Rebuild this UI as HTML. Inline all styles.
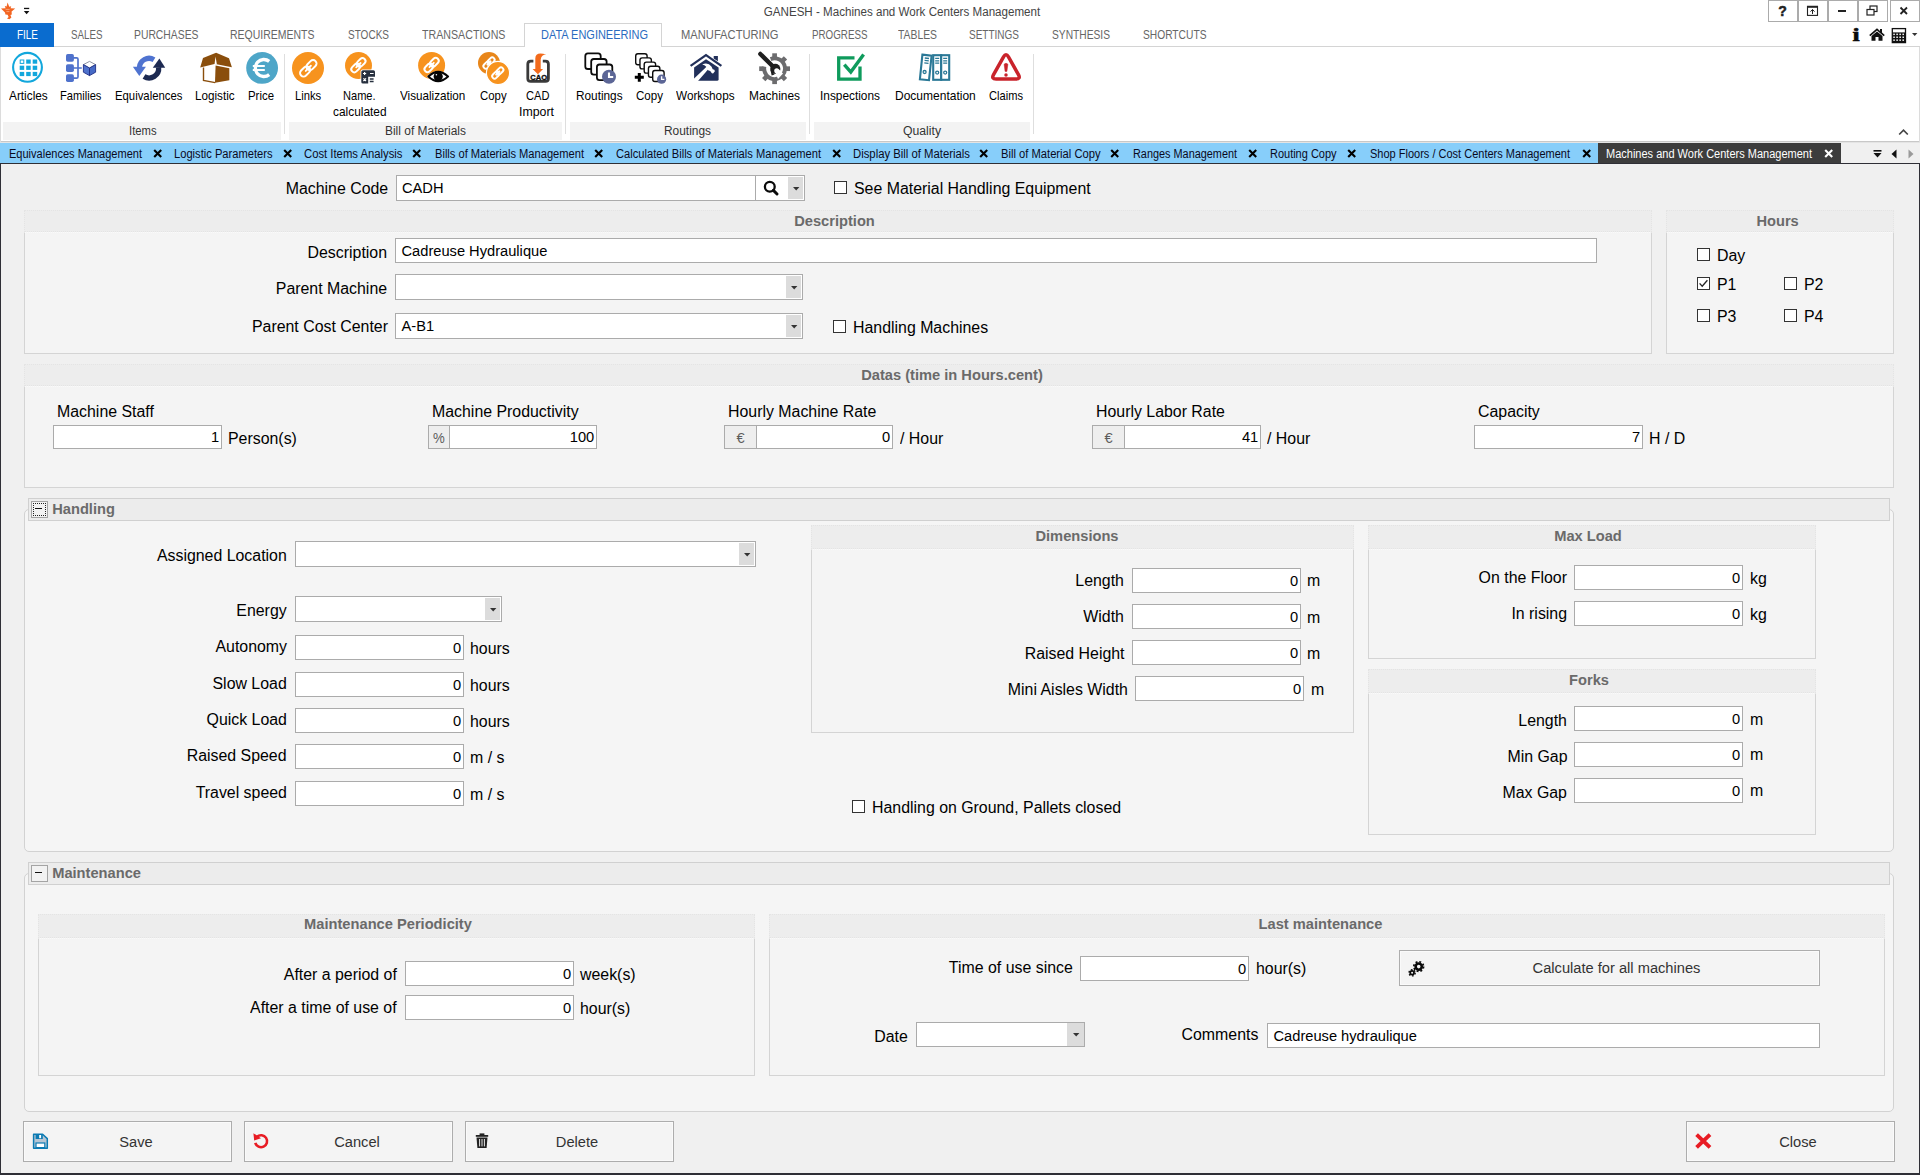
<!DOCTYPE html>
<html lang="en"><head><meta charset="utf-8"><title>GANESH - Machines and Work Centers Management</title>
<style>
html,body{margin:0;padding:0;background:#fff;}
body{width:1920px;height:1175px;overflow:hidden;font-family:"Liberation Sans",sans-serif;}
#app{position:relative;width:1920px;height:1175px;overflow:hidden;background:#fff;color:#000;}
#app div,#app span.t,#app svg{position:absolute;box-sizing:border-box;}
span.t{white-space:nowrap;display:block;}
.inp{background:#fff;border:1px solid #ababab;}
.grp-h{background:#ededed;border:1px dotted #e4e4e4;}
.grp-b{background:#f4f4f4;border:1px solid #d4d4d4;border-top:1px dotted #fafafa;}
.btn{background:#f4f4f4;border:1px solid #adadad;box-shadow:inset 0 0 0 1px #fafafa;}
.cb{background:#fff;border:1px solid #333;}
.dd{background:#dcdcdc;}
.addon{background:#eee;border:1px solid #ababab;}

</style></head>
<body>
<div id="app">
<!-- title bar -->
<svg style="left:0px;top:2px;" width="17" height="18" viewBox="0 0 17 18"><path d="M7.6 0.6 L9.2 4.8 L11.2 4.2 L10.6 6.2 L15.2 6.6 L11.6 9.6 L11.8 12.4 L10.4 13 L11.4 15.6 L9.4 17.2 L7 16.4 L8.6 15 L7.6 12.8 L5.4 12.6 L5 10.4 L1 6.6 L5.6 6.2 L4.8 4 L6.6 4.6 Z" fill="#f26522"/>
<path d="M5.6 7.4 L9.6 7.4 M6.4 9.6 L9.4 9.6" stroke="#f9a981" stroke-width="0.9" fill="none"/></svg>
<svg style="left:23px;top:7px;" width="8" height="8" viewBox="0 0 8 8"><rect x="1" y="0.8" width="5.2" height="1.3" fill="#111"/><path d="M0.8 4 L6.4 4 L3.6 7.2 Z" fill="#111"/></svg>
<span class="t" style="top:3.00px;font-size:12px;line-height:18px;color:#444;left:501.5px;width:800px;text-align:center;transform:scaleX(0.9672);transform-origin:center center;">GANESH - Machines and Work Centers Management</span>
<div style="left:1768px;top:0px;width:30px;height:22px;background:#fff;border:1px solid #ababab;"></div>
<div style="left:1798px;top:0px;width:30px;height:22px;background:#fff;border:1px solid #ababab;"></div>
<div style="left:1828px;top:0px;width:30px;height:22px;background:#fff;border:1px solid #ababab;"></div>
<div style="left:1858px;top:0px;width:30px;height:22px;background:#fff;border:1px solid #ababab;"></div>
<div style="left:1890px;top:0px;width:30px;height:22px;background:#fff;border:1px solid #ababab;"></div>
<span class="t" style="top:1.30px;font-size:14px;line-height:21px;color:#222;font-weight:bold;left:1382.6px;width:800px;text-align:center;-webkit-text-stroke:0.5px #222;">?</span>
<svg style="left:1806px;top:5px;" width="13" height="12" viewBox="0 0 13 12"><rect x="1.5" y="1.4" width="10" height="9" fill="none" stroke="#222" stroke-width="1.1"/><rect x="1" y="0.9" width="11" height="1.9" fill="#222"/><path d="M6.5 9 V4.6 M4.5 6.6 L6.5 4.5 L8.5 6.6" fill="none" stroke="#222" stroke-width="1"/></svg>
<div style="left:1838px;top:10px;width:8px;height:2px;background:#222;"></div>
<svg style="left:1866px;top:5px;" width="13" height="12" viewBox="0 0 13 12"><rect x="4" y="1" width="7" height="5.5" fill="#fff" stroke="#222" stroke-width="1.2"/><rect x="1" y="4.5" width="7" height="5.5" fill="#fff" stroke="#222" stroke-width="1.2"/></svg>
<svg style="left:1899px;top:6px;" width="10" height="10" viewBox="0 0 10 10"><path d="M1.5 1.5 L8 8 M8 1.5 L1.5 8" stroke="#222" stroke-width="1.8" fill="none"/></svg>
<!-- ribbon tabs -->
<div style="left:0px;top:46px;width:1920px;height:1px;background:#d4d4d4;"></div>
<div style="left:0px;top:23px;width:54px;height:24px;background:#0a6ccf;"></div>
<span class="t" style="top:25.80px;font-size:12.6px;line-height:19px;color:#fff;left:16.5px;transform:scaleX(0.7892);transform-origin:left center;">FILE</span>
<div style="left:524px;top:23px;width:138px;height:24px;background:#fff;border:1px solid #d4d4d4;border-bottom:none;"></div>
<span class="t" style="top:25.80px;font-size:12.6px;line-height:19px;color:#666;left:70.5px;transform:scaleX(0.7754);transform-origin:left center;">SALES</span>
<span class="t" style="top:25.80px;font-size:12.6px;line-height:19px;color:#666;left:134px;transform:scaleX(0.8225);transform-origin:left center;">PURCHASES</span>
<span class="t" style="top:25.80px;font-size:12.6px;line-height:19px;color:#666;left:230px;transform:scaleX(0.8324);transform-origin:left center;">REQUIREMENTS</span>
<span class="t" style="top:25.80px;font-size:12.6px;line-height:19px;color:#666;left:348px;transform:scaleX(0.7949);transform-origin:left center;">STOCKS</span>
<span class="t" style="top:25.80px;font-size:12.6px;line-height:19px;color:#666;left:421.5px;transform:scaleX(0.8459);transform-origin:left center;">TRANSACTIONS</span>
<span class="t" style="top:25.80px;font-size:12.6px;line-height:19px;color:#2a6bc0;left:540.5px;transform:scaleX(0.8717);transform-origin:left center;">DATA ENGINEERING</span>
<span class="t" style="top:25.80px;font-size:12.6px;line-height:19px;color:#666;left:680.5px;transform:scaleX(0.8872);transform-origin:left center;">MANUFACTURING</span>
<span class="t" style="top:25.80px;font-size:12.6px;line-height:19px;color:#666;left:811.5px;transform:scaleX(0.7771);transform-origin:left center;">PROGRESS</span>
<span class="t" style="top:25.80px;font-size:12.6px;line-height:19px;color:#666;left:898px;transform:scaleX(0.8230);transform-origin:left center;">TABLES</span>
<span class="t" style="top:25.80px;font-size:12.6px;line-height:19px;color:#666;left:969px;transform:scaleX(0.7936);transform-origin:left center;">SETTINGS</span>
<span class="t" style="top:25.80px;font-size:12.6px;line-height:19px;color:#666;left:1052px;transform:scaleX(0.8121);transform-origin:left center;">SYNTHESIS</span>
<span class="t" style="top:25.80px;font-size:12.6px;line-height:19px;color:#666;left:1142.5px;transform:scaleX(0.8123);transform-origin:left center;">SHORTCUTS</span>
<span class="t" style="top:20.60px;font-size:19px;line-height:28px;color:#0a0a0a;font-weight:bold;left:1455.5px;width:800px;text-align:center;transform:scaleX(1.3500);transform-origin:center center;font-family:'Liberation Serif',serif;-webkit-text-stroke:0.6px #0a0a0a;">i</span>
<svg style="left:1869px;top:28px;" width="16" height="13" viewBox="0 0 16 13"><path d="M8 0.3 L0.2 7 L1.3 8.2 L8 2.5 L14.7 8.2 L15.8 7 L13 4.6 V1 H11 V2.9 Z" fill="#111"/><path d="M2.5 8 L8 3.5 L13.5 8 V12.8 H9.5 V9 H6.5 V12.8 H2.5 Z" fill="#111"/></svg>
<svg style="left:1891px;top:27px;" width="16" height="17" viewBox="0 0 16 17"><rect x="1.3" y="1.6" width="13.2" height="14" fill="#fff" stroke="#111" stroke-width="1.3"/><rect x="1.3" y="5.4" width="13.2" height="10.2" fill="#111"/><rect x="2.30" y="6.60" width="1.5" height="1.5" fill="#fff"/><rect x="5.35" y="6.60" width="1.5" height="1.5" fill="#fff"/><rect x="8.40" y="6.60" width="1.5" height="1.5" fill="#fff"/><rect x="11.45" y="6.60" width="1.5" height="1.5" fill="#fff"/><rect x="2.30" y="9.50" width="1.5" height="1.5" fill="#fff"/><rect x="5.35" y="9.50" width="1.5" height="1.5" fill="#fff"/><rect x="8.40" y="9.50" width="1.5" height="1.5" fill="#fff"/><rect x="11.45" y="9.50" width="1.5" height="1.5" fill="#fff"/><rect x="2.30" y="12.40" width="1.5" height="1.5" fill="#fff"/><rect x="5.35" y="12.40" width="1.5" height="1.5" fill="#fff"/><rect x="8.40" y="12.40" width="1.5" height="1.5" fill="#fff"/><rect x="11.45" y="12.40" width="1.5" height="1.5" fill="#fff"/></svg>
<svg style="left:1912px;top:33px;" width="6" height="4" viewBox="0 0 6 4"><path d="M0 0 H5.4 L2.7 3 Z" fill="#333"/></svg>
<!-- ribbon body -->
<div style="left:0px;top:141px;width:1920px;height:1px;background:#c8c8c8;"></div>
<div style="left:0px;top:142px;width:1920px;height:1px;background:#e4e4e4;"></div>
<div style="left:0px;top:47px;width:1px;height:95px;background:#dcdcdc;"></div>
<div style="left:1919px;top:47px;width:1px;height:95px;background:#dcdcdc;"></div>
<div style="left:3px;top:122px;width:278px;height:18px;background:#f3f3f3;"></div>
<span class="t" style="top:122.00px;font-size:12px;line-height:18px;color:#333;left:128.5px;transform:scaleX(0.9374);transform-origin:left center;">Items</span>
<div style="left:289px;top:122px;width:273px;height:18px;background:#f3f3f3;"></div>
<span class="t" style="top:122.00px;font-size:12px;line-height:18px;color:#333;left:385px;transform:scaleX(0.9956);transform-origin:left center;">Bill of Materials</span>
<div style="left:570px;top:122px;width:236px;height:18px;background:#f3f3f3;"></div>
<span class="t" style="top:122.00px;font-size:12px;line-height:18px;color:#333;left:664px;transform:scaleX(0.9924);transform-origin:left center;">Routings</span>
<div style="left:814px;top:122px;width:216px;height:18px;background:#f3f3f3;"></div>
<span class="t" style="top:122.00px;font-size:12px;line-height:18px;color:#333;left:903px;transform:scaleX(1.0175);transform-origin:left center;">Quality</span>
<div style="left:284px;top:54px;width:1px;height:80px;background:#dedede;"></div>
<div style="left:565px;top:54px;width:1px;height:80px;background:#dedede;"></div>
<div style="left:809px;top:54px;width:1px;height:80px;background:#dedede;"></div>
<div style="left:1033px;top:54px;width:1px;height:80px;background:#dedede;"></div>
<span class="t" style="top:86.90px;font-size:12.6px;line-height:19px;color:#000;left:9px;transform:scaleX(0.9393);transform-origin:left center;">Articles</span>
<span class="t" style="top:86.90px;font-size:12.6px;line-height:19px;color:#000;left:60.3px;transform:scaleX(0.8827);transform-origin:left center;">Families</span>
<span class="t" style="top:86.90px;font-size:12.6px;line-height:19px;color:#000;left:115.4px;transform:scaleX(0.8993);transform-origin:left center;">Equivalences</span>
<span class="t" style="top:86.90px;font-size:12.6px;line-height:19px;color:#000;left:195.4px;transform:scaleX(0.9270);transform-origin:left center;">Logistic</span>
<span class="t" style="top:86.90px;font-size:12.6px;line-height:19px;color:#000;left:248px;transform:scaleX(0.9057);transform-origin:left center;">Price</span>
<span class="t" style="top:86.90px;font-size:12.6px;line-height:19px;color:#000;left:294.6px;transform:scaleX(0.8908);transform-origin:left center;">Links</span>
<span class="t" style="top:86.90px;font-size:12.6px;line-height:19px;color:#000;left:343.4px;transform:scaleX(0.8785);transform-origin:left center;">Name.</span>
<span class="t" style="top:102.90px;font-size:12.6px;line-height:19px;color:#000;left:333px;transform:scaleX(0.9448);transform-origin:left center;">calculated</span>
<span class="t" style="top:86.90px;font-size:12.6px;line-height:19px;color:#000;left:400px;transform:scaleX(0.9275);transform-origin:left center;">Visualization</span>
<span class="t" style="top:86.90px;font-size:12.6px;line-height:19px;color:#000;left:480px;transform:scaleX(0.9044);transform-origin:left center;">Copy</span>
<span class="t" style="top:86.90px;font-size:12.6px;line-height:19px;color:#000;left:526px;transform:scaleX(0.8796);transform-origin:left center;">CAD</span>
<span class="t" style="top:102.90px;font-size:12.6px;line-height:19px;color:#000;left:519px;transform:scaleX(0.9802);transform-origin:left center;">Import</span>
<span class="t" style="top:86.90px;font-size:12.6px;line-height:19px;color:#000;left:576.4px;transform:scaleX(0.9371);transform-origin:left center;">Routings</span>
<span class="t" style="top:86.90px;font-size:12.6px;line-height:19px;color:#000;left:636px;transform:scaleX(0.9180);transform-origin:left center;">Copy</span>
<span class="t" style="top:86.90px;font-size:12.6px;line-height:19px;color:#000;left:676.4px;transform:scaleX(0.9333);transform-origin:left center;">Workshops</span>
<span class="t" style="top:86.90px;font-size:12.6px;line-height:19px;color:#000;left:749px;transform:scaleX(0.9458);transform-origin:left center;">Machines</span>
<span class="t" style="top:86.90px;font-size:12.6px;line-height:19px;color:#000;left:820px;transform:scaleX(0.9414);transform-origin:left center;">Inspections</span>
<span class="t" style="top:86.90px;font-size:12.6px;line-height:19px;color:#000;left:894.6px;transform:scaleX(0.9535);transform-origin:left center;">Documentation</span>
<span class="t" style="top:86.90px;font-size:12.6px;line-height:19px;color:#000;left:989px;transform:scaleX(0.8831);transform-origin:left center;">Claims</span>
<svg style="left:1898px;top:128px;" width="11" height="8" viewBox="0 0 11 8"><path d="M1.2 6.5 L5.5 2.2 L9.8 6.5" fill="none" stroke="#444" stroke-width="1.7"/></svg>
<!-- ribbon icons -->
<svg style="left:11px;top:51px;" width="34" height="34" viewBox="11 51 34 34"><circle cx="27.5" cy="67.3" r="14.4" fill="#fff" stroke="#12a7dc" stroke-width="2.1"/><rect x="20.2" y="60.0" width="3.6" height="3.4" fill="#fff" stroke="#12a7dc" stroke-width="1"/><rect x="26.2" y="59.5" width="4.5" height="4.2" fill="#12a7dc"/><rect x="32.7" y="59.5" width="4.5" height="4.2" fill="#12a7dc"/><rect x="19.7" y="65.7" width="4.5" height="4.2" fill="#12a7dc"/><rect x="26.2" y="65.7" width="4.5" height="4.2" fill="#12a7dc"/><rect x="32.7" y="65.7" width="4.5" height="4.2" fill="#12a7dc"/><rect x="19.7" y="71.9" width="4.5" height="4.2" fill="#12a7dc"/><rect x="26.2" y="71.9" width="4.5" height="4.2" fill="#12a7dc"/><rect x="32.7" y="71.9" width="4.5" height="4.2" fill="#12a7dc"/></svg>
<svg style="left:64px;top:52px;" width="34" height="32" viewBox="64 52 34 32"><rect x="66" y="54.1" width="7.9" height="7.7" rx="1.7" fill="#4f72cc"/><rect x="66" y="64.2" width="7.9" height="7.7" rx="1.7" fill="#4f72cc"/><rect x="66" y="74.3" width="7.9" height="7.7" rx="1.7" fill="#4f72cc"/><path d="M73 57.9 H76.6 Q78 57.9 78 59.3 V76.7 Q78 78.1 76.6 78.1 H73 M73 68 H81.8" fill="none" stroke="#4f72cc" stroke-width="1.7"/><path d="M83.4 64.6 L89.5 61.4 L95.6 64.6 L89.5 68 Z" fill="#fff" stroke="#7f8697" stroke-width="0.9"/><path d="M83.4 64.6 L89.5 68 V75.6 L83.4 72.2 Z" fill="#4f72cc" stroke="#1f2f86" stroke-width="0.9" stroke-linejoin="round"/><path d="M95.6 64.6 L89.5 68 V75.6 L95.6 72.2 Z" fill="#466ac6" stroke="#1f2f86" stroke-width="0.9" stroke-linejoin="round"/></svg>
<svg style="left:132px;top:52px;" width="34" height="32" viewBox="132 52 34 32"><path d="M154 59.8 A9.6 9.6 0 0 0 139.4 67.6" fill="none" stroke="#4f73d0" stroke-width="5.3"/><path d="M132.9 66.8 H145.9 L139.3 75.9 Z" fill="#4f73d0"/><path d="M144 76.6 A9.6 9.6 0 0 0 158.6 67.4" fill="none" stroke="#1d2a52" stroke-width="5.3"/><path d="M152.8 67.7 H165.2 L159.4 58.6 Z" fill="#1d2a52"/></svg>
<svg style="left:199px;top:52px;" width="34" height="32" viewBox="199 52 34 32"><path d="M216.1 52.8 L229 58.2 L231.9 67.3 L216.6 64.3 L214.4 64.1 L200.2 67.6 L203 58.1 Z" fill="#8a4e0c"/><path d="M215.5 56.5 L216.9 64.6 L214.5 64.4 Z" fill="#fff"/><path d="M215.6 65.4 L229.3 68.3 V80.3 L215 82.8 Z" fill="#8a4e0c"/><path d="M203.5 67.6 V80.4 L215.2 82.6" fill="none" stroke="#8a4e0c" stroke-width="1.4"/></svg>
<svg style="left:245px;top:51px;" width="34" height="34" viewBox="245 51 34 34"><circle cx="262.1" cy="67.9" r="15.9" fill="#4ea6c8"/><path d="M269.2 61.4 A8.5 8.5 0 1 0 269.2 74.6" fill="none" stroke="#fff" stroke-width="3.3"/><path d="M252.8 66 H264.8 M252.8 70 H264.8" stroke="#fff" stroke-width="2"/></svg>
<svg style="left:291px;top:51px;" width="34" height="34" viewBox="291 51 34 34"><circle cx="308" cy="68" r="16" fill="#f7931e"/><g transform="translate(308.3 68.3) rotate(-45) scale(1.0)"><rect x="-10.2" y="-3.5" width="11.4" height="7" rx="3.5" fill="#f7931e" stroke="#fff" stroke-width="1.95"/><rect x="-1.2" y="-3.5" width="11.4" height="7" rx="3.5" fill="none" stroke="#fff" stroke-width="1.95"/><rect x="-4.6" y="-0.95" width="9.2" height="1.90" rx="1" fill="#fff"/></g></svg>
<svg style="left:344px;top:51px;" width="33" height="34" viewBox="344 51 33 34"><circle cx="358.5" cy="65.5" r="13.5" fill="#f7931e"/><g transform="translate(358.4 65.2) rotate(-45) scale(0.86)"><rect x="-10.2" y="-3.5" width="11.4" height="7" rx="3.5" fill="#f7931e" stroke="#fff" stroke-width="2.27"/><rect x="-1.2" y="-3.5" width="11.4" height="7" rx="3.5" fill="none" stroke="#fff" stroke-width="2.27"/><rect x="-4.6" y="-1.10" width="9.2" height="2.21" rx="1" fill="#fff"/></g><rect x="360.6" y="69.4" width="15" height="14.8" rx="2" fill="#fff"/><path d="M363 70.2 H373.4 Q375 70.2 375 71.8 V76.8 H368.2 V83.6 H363 Q361.3 83.6 361.3 82 V71.8 Q361.3 70.2 363 70.2 Z" fill="#27303f"/><path d="M363 73.5 H366.2 M364.6 71.9 V75.1 M370 73.5 H373.6 M363.4 78.4 L366 81 M366 78.4 L363.4 81" stroke="#fff" stroke-width="1.2" fill="none"/><path d="M369.8 79 H373.6 M369.8 81.4 H373.6" stroke="#27303f" stroke-width="1.5" fill="none"/></svg>
<svg style="left:417px;top:51px;" width="34" height="35" viewBox="417 51 34 35"><circle cx="431.6" cy="65.4" r="13.5" fill="#f7931e"/><g transform="translate(431.6 65) rotate(-45) scale(0.86)"><rect x="-10.2" y="-3.5" width="11.4" height="7" rx="3.5" fill="#f7931e" stroke="#fff" stroke-width="2.27"/><rect x="-1.2" y="-3.5" width="11.4" height="7" rx="3.5" fill="none" stroke="#fff" stroke-width="2.27"/><rect x="-4.6" y="-1.10" width="9.2" height="2.21" rx="1" fill="#fff"/></g><path d="M426.6 76.5 Q438 65.4 449.6 76.5 Q438 87.6 426.6 76.5 Z" fill="#fff"/><path d="M428.4 76.5 Q438.1 67.2 448 76.5 Q438.1 85.8 428.4 76.5 Z" fill="#fff" stroke="#050505" stroke-width="2.1" stroke-linejoin="round"/><circle cx="438.2" cy="76.5" r="4.6" fill="#050505"/><circle cx="436.4" cy="74.8" r="0.8" fill="#fff"/></svg>
<svg style="left:477px;top:51px;" width="34" height="35" viewBox="477 51 34 35"><circle cx="489" cy="63" r="11" fill="#e8861a"/><g transform="translate(489 63) rotate(-45) scale(0.68)"><rect x="-10.2" y="-3.5" width="11.4" height="7" rx="3.5" fill="#e8861a" stroke="#fff" stroke-width="2.87"/><rect x="-1.2" y="-3.5" width="11.4" height="7" rx="3.5" fill="none" stroke="#fff" stroke-width="2.87"/><rect x="-4.6" y="-1.40" width="9.2" height="2.79" rx="1" fill="#fff"/></g><circle cx="498" cy="73" r="11.6" fill="#f7931e" stroke="#fff" stroke-width="1.2"/><g transform="translate(497.8 73) rotate(-45) scale(0.68)"><rect x="-10.2" y="-3.5" width="11.4" height="7" rx="3.5" fill="#f7931e" stroke="#fff" stroke-width="2.87"/><rect x="-1.2" y="-3.5" width="11.4" height="7" rx="3.5" fill="none" stroke="#fff" stroke-width="2.87"/><rect x="-4.6" y="-1.40" width="9.2" height="2.79" rx="1" fill="#fff"/></g></svg>
<svg style="left:525px;top:51px;" width="27" height="34" viewBox="525 51 27 34"><path d="M533.4 61.1 H530.8 Q527.8 61.1 527.8 64.1 V78.4 Q527.8 81.4 530.8 81.4 H545.4 Q548.4 81.4 548.4 78.4 V64.1 Q548.4 61.1 545.4 61.1 H542.8" fill="none" stroke="#3a3a3a" stroke-width="2.8"/><path d="M535.3 69 V58.4 Q535.4 51.4 546.2 54.6 Q541.4 54.6 540.7 59.4 V69 H543.1 L537.9 74.2 L532.6 69 Z" fill="#f26a1b"/><text x="538.7" y="80.3" font-family="Liberation Sans, sans-serif" font-weight="bold" font-size="7.6" text-anchor="middle" fill="#0a0a0a" stroke="#0a0a0a" stroke-width="0.3" textLength="16.8" lengthAdjust="spacingAndGlyphs">CAO</text></svg>
<svg style="left:583px;top:51px;" width="35" height="34" viewBox="583 51 35 34"><rect x="585.3" y="53.4" width="15.4" height="15.6" rx="2.6" fill="#fff" stroke="#0c0c0c" stroke-width="1.8"/><rect x="591.2" y="59" width="15.4" height="15.6" rx="2.6" fill="#fff" stroke="#0c0c0c" stroke-width="1.8"/><rect x="596.9" y="64.5" width="15.4" height="15.6" rx="2.6" fill="#fff" stroke="#0c0c0c" stroke-width="1.8"/><circle cx="609" cy="76.8" r="7" fill="#5c6696"/><path d="M609 72.5 V77.0 H613.2" fill="none" stroke="#fff" stroke-width="2.10"/></svg>
<svg style="left:633px;top:51px;" width="35" height="34" viewBox="633 51 35 34"><rect x="635.70" y="53.70" width="11.4" height="11" rx="2.2" fill="#fff" stroke="#0c0c0c" stroke-width="1.4"/><rect x="639.95" y="57.90" width="11.4" height="11" rx="2.2" fill="#fff" stroke="#0c0c0c" stroke-width="1.4"/><rect x="644.20" y="62.10" width="11.4" height="11" rx="2.2" fill="#fff" stroke="#0c0c0c" stroke-width="1.4"/><rect x="648.45" y="66.30" width="11.4" height="11" rx="2.2" fill="#fff" stroke="#0c0c0c" stroke-width="1.4"/><rect x="652.70" y="70.50" width="11.4" height="11" rx="2.2" fill="#fff" stroke="#0c0c0c" stroke-width="1.4"/><path d="M634.8 77.3 H643.8 M639.3 72.9 V81.8" stroke="#000" stroke-width="3" fill="none"/><circle cx="661.6" cy="79.2" r="4.6" fill="#5c6696"/><path d="M661.6 76.3 V79.4 H664.4" fill="none" stroke="#fff" stroke-width="1.38"/></svg>
<svg style="left:689px;top:52px;" width="34" height="32" viewBox="689 52 34 32"><path d="M690.6 65.9 L706 55.2 L721.4 65.9" fill="none" stroke="#22305a" stroke-width="2.2"/><path d="M713.7 56 H717.9 V61.3 L713.7 58.4 Z" fill="#22305a"/><path d="M706 59.2 L718.6 67.5 V79.2 Q718.6 80.8 717 80.8 H695.6 Q694.1 80.8 694.1 79.3 V67.5 Z" fill="#22305a"/><path d="M693.6 79 L706.8 66.4 L708.9 68.4 L698 80.9 H693.6 Z" fill="#fff"/><path d="M702.2 64.6 Q707.8 61.8 711.6 66.8 L712.7 69.3 Q714.9 69.5 714.9 71.2 L713.1 73.4 Q711.2 73.6 711 71.8 Q709.6 70.3 708 70.2 L706.2 66.8 Q704.6 65 702.2 64.6 Z" fill="#fff"/></svg>
<svg style="left:756px;top:50px;" width="36" height="36" viewBox="756 50 36 36"><path d="M770.6 59.1 A10.4 10.4 0 1 1 764.4 66.6" fill="none" stroke="#6c6c6e" stroke-width="3.9"/><rect x="11.3" y="-2.35" width="4.1" height="4.7" fill="#6c6c6e" transform="translate(774.6 68.7) rotate(-90)"/><rect x="11.3" y="-2.35" width="4.1" height="4.7" fill="#6c6c6e" transform="translate(774.6 68.7) rotate(-45)"/><rect x="11.3" y="-2.35" width="4.1" height="4.7" fill="#6c6c6e" transform="translate(774.6 68.7) rotate(0)"/><rect x="11.3" y="-2.35" width="4.1" height="4.7" fill="#6c6c6e" transform="translate(774.6 68.7) rotate(45)"/><rect x="11.3" y="-2.35" width="4.1" height="4.7" fill="#6c6c6e" transform="translate(774.6 68.7) rotate(90)"/><rect x="11.3" y="-2.35" width="4.1" height="4.7" fill="#6c6c6e" transform="translate(774.6 68.7) rotate(135)"/><rect x="11.3" y="-2.35" width="4.1" height="4.7" fill="#6c6c6e" transform="translate(774.6 68.7) rotate(180)"/><path d="M760.3 53.9 L773 66.6" stroke="#1f1f1f" stroke-width="4.3" stroke-linecap="round" fill="none"/><circle cx="775.3" cy="68.9" r="5.1" fill="#1f1f1f"/><path d="M774.6 74.6 L770.6 70 L771.6 75.6 Z" fill="#1f1f1f"/><circle cx="776.7" cy="70.7" r="2.5" fill="#fff"/><path d="M775.2 72.6 L778.8 69.2 L783 73.5 L778 79 Z" fill="#fff"/></svg>
<svg style="left:836px;top:52px;" width="30" height="31" viewBox="836 52 30 31"><path d="M854.5 57.9 H838.7 V79.2 H860 V66.5" fill="none" stroke="#0f9b5c" stroke-width="3.3"/><path d="M844.3 64.6 L850.8 72 L863.6 54.6" fill="none" stroke="#0f9b5c" stroke-width="3.4"/></svg>
<svg style="left:918px;top:52px;" width="34" height="31" viewBox="918 52 34 31"><g fill="#fff" stroke="#2a7896" stroke-width="2.1"><path d="M922.4 54.6 L931.6 55.6 L929 80.2 L919.9 79.2 Z"/><rect x="933.2" y="55.2" width="8" height="24.6"/><rect x="941.2" y="55.2" width="8" height="24.6"/></g><g stroke="#2a7896" stroke-width="1.3" fill="none"><path d="M924.8 58 L929 58.5 M924.6 60.4 L928.8 60.9 M924.3 62.8 L928.5 63.3"/><path d="M935.2 58.4 H939.2 M935.2 60.8 H939.2 M935.2 63.2 H939.2 M943.2 58.4 H947.2 M943.2 60.8 H947.2 M943.2 63.2 H947.2"/><circle cx="924.6" cy="72" r="1.5"/><circle cx="937.2" cy="72.6" r="1.5"/><circle cx="945.2" cy="72.6" r="1.5"/></g></svg>
<svg style="left:989px;top:51px;" width="34" height="33" viewBox="989 51 34 33"><path d="M1003.54 56.95 Q1006.00 52.60 1008.46 56.95 L1018.44 74.65 Q1020.90 79.00 1015.90 79.00 L996.10 79.00 Q991.10 79.00 993.56 74.65 Z" fill="#fff" stroke="#c9232b" stroke-width="3.5" stroke-linejoin="round"/><path d="M1004.1 64.2 Q1006 62.2 1007.9 64.2 L1006.9 71.4 H1005.1 Z" fill="#c9232b" stroke="#c9232b" stroke-width="0.5" stroke-linejoin="round"/><circle cx="1006" cy="74.9" r="1.75" fill="#c9232b"/></svg>
<!-- doc tabs -->
<div style="left:0px;top:143px;width:1598px;height:20px;background:#87cefa;"></div>
<div style="left:1598px;top:143px;width:243px;height:20px;background:#3d3d3d;"></div>
<div style="left:1841px;top:143px;width:79px;height:20px;background:#f0f0f0;"></div>
<div style="left:0px;top:163px;width:1920px;height:1px;background:#2f2f36;"></div>
<span class="t" style="top:144.60px;font-size:12px;line-height:18px;color:#0a0a1e;left:9px;transform:scaleX(0.9188);transform-origin:left center;">Equivalences Management</span>
<svg style="left:153px;top:149px;" width="10" height="9" viewBox="0 0 10 9"><path d="M1.2 1 L8.2 8 M8.2 1 L1.2 8" stroke="#000" stroke-width="2.1" fill="none"/></svg>
<span class="t" style="top:144.60px;font-size:12px;line-height:18px;color:#0a0a1e;left:174px;transform:scaleX(0.9289);transform-origin:left center;">Logistic Parameters</span>
<svg style="left:283px;top:149px;" width="10" height="9" viewBox="0 0 10 9"><path d="M1.2 1 L8.2 8 M8.2 1 L1.2 8" stroke="#000" stroke-width="2.1" fill="none"/></svg>
<span class="t" style="top:144.60px;font-size:12px;line-height:18px;color:#0a0a1e;left:304px;transform:scaleX(0.9408);transform-origin:left center;">Cost Items Analysis</span>
<svg style="left:412px;top:149px;" width="10" height="9" viewBox="0 0 10 9"><path d="M1.2 1 L8.2 8 M8.2 1 L1.2 8" stroke="#000" stroke-width="2.1" fill="none"/></svg>
<span class="t" style="top:144.60px;font-size:12px;line-height:18px;color:#0a0a1e;left:435px;transform:scaleX(0.9270);transform-origin:left center;">Bills of Materials Management</span>
<svg style="left:593.5px;top:149px;" width="10" height="9" viewBox="0 0 10 9"><path d="M1.2 1 L8.2 8 M8.2 1 L1.2 8" stroke="#000" stroke-width="2.1" fill="none"/></svg>
<span class="t" style="top:144.60px;font-size:12px;line-height:18px;color:#0a0a1e;left:616px;transform:scaleX(0.9286);transform-origin:left center;">Calculated Bills of Materials Management</span>
<svg style="left:831.5px;top:149px;" width="10" height="9" viewBox="0 0 10 9"><path d="M1.2 1 L8.2 8 M8.2 1 L1.2 8" stroke="#000" stroke-width="2.1" fill="none"/></svg>
<span class="t" style="top:144.60px;font-size:12px;line-height:18px;color:#0a0a1e;left:853px;transform:scaleX(0.9433);transform-origin:left center;">Display Bill of Materials</span>
<svg style="left:979px;top:149px;" width="10" height="9" viewBox="0 0 10 9"><path d="M1.2 1 L8.2 8 M8.2 1 L1.2 8" stroke="#000" stroke-width="2.1" fill="none"/></svg>
<span class="t" style="top:144.60px;font-size:12px;line-height:18px;color:#0a0a1e;left:1001px;transform:scaleX(0.9325);transform-origin:left center;">Bill of Material Copy</span>
<svg style="left:1110px;top:149px;" width="10" height="9" viewBox="0 0 10 9"><path d="M1.2 1 L8.2 8 M8.2 1 L1.2 8" stroke="#000" stroke-width="2.1" fill="none"/></svg>
<span class="t" style="top:144.60px;font-size:12px;line-height:18px;color:#0a0a1e;left:1133px;transform:scaleX(0.9065);transform-origin:left center;">Ranges Management</span>
<svg style="left:1248px;top:149px;" width="10" height="9" viewBox="0 0 10 9"><path d="M1.2 1 L8.2 8 M8.2 1 L1.2 8" stroke="#000" stroke-width="2.1" fill="none"/></svg>
<span class="t" style="top:144.60px;font-size:12px;line-height:18px;color:#0a0a1e;left:1270px;transform:scaleX(0.9147);transform-origin:left center;">Routing Copy</span>
<svg style="left:1347px;top:149px;" width="10" height="9" viewBox="0 0 10 9"><path d="M1.2 1 L8.2 8 M8.2 1 L1.2 8" stroke="#000" stroke-width="2.1" fill="none"/></svg>
<span class="t" style="top:144.60px;font-size:12px;line-height:18px;color:#0a0a1e;left:1370px;transform:scaleX(0.9171);transform-origin:left center;">Shop Floors / Cost Centers Management</span>
<svg style="left:1581.5px;top:149px;" width="10" height="9" viewBox="0 0 10 9"><path d="M1.2 1 L8.2 8 M8.2 1 L1.2 8" stroke="#000" stroke-width="2.1" fill="none"/></svg>
<span class="t" style="top:144.60px;font-size:12px;line-height:18px;color:#fff;left:1606px;transform:scaleX(0.9174);transform-origin:left center;">Machines and Work Centers Management</span>
<svg style="left:1824px;top:149px;" width="10" height="9" viewBox="0 0 10 9"><path d="M1.2 1 L8.2 8 M8.2 1 L1.2 8" stroke="#fff" stroke-width="2.1" fill="none"/></svg>
<svg style="left:1873px;top:150px;" width="9" height="8" viewBox="0 0 9 8"><rect x="0.5" y="0" width="8" height="1.6" fill="#111"/><path d="M0.5 3 H8.5 L4.5 7.5 Z" fill="#111"/></svg>
<svg style="left:1891px;top:149px;" width="6" height="10" viewBox="0 0 6 10"><path d="M5.5 0.5 V9.5 L0.5 5 Z" fill="#111"/></svg>
<svg style="left:1908px;top:149px;" width="6" height="10" viewBox="0 0 6 10"><path d="M0.5 0.5 V9.5 L5.5 5 Z" fill="#9a9a9a"/></svg>
<!-- form -->
<div style="left:0px;top:164px;width:1920px;height:1011px;background:#f0f0f0;"></div>
<div style="left:0px;top:164px;width:1px;height:1011px;background:#2f2f36;"></div>
<div style="left:0px;top:1173px;width:1920px;height:2px;background:#2f2f36;"></div>
<div style="left:1919px;top:164px;width:1px;height:1011px;background:#2f2f36;"></div>
<span class="t" style="top:177.00px;font-size:16px;line-height:24px;right:1531.5px;transform:scaleX(0.9930);transform-origin:right center;">Machine Code</span>
<div class="inp" style="left:396px;top:175px;width:409px;height:26px;"></div>
<div style="left:755px;top:176px;width:1px;height:24px;background:#ababab;"></div>
<span class="t" style="top:177.30px;font-size:14.67px;line-height:22px;left:402px;">CADH</span>
<svg style="left:763px;top:180px;" width="16" height="16" viewBox="0 0 16 16"><circle cx="6.8" cy="6.7" r="4.9" fill="none" stroke="#0a0a0a" stroke-width="2.3"/><path d="M10.4 10.4 L14 14" stroke="#0a0a0a" stroke-width="2.9" stroke-linecap="round"/></svg>
<div class="dd" style="left:788px;top:177px;width:15px;height:22px;"></div>
<svg style="left:792.5px;top:186.5px;" width="7" height="4" viewBox="0 0 7 4"><path d="M0 0 H6.4 L3.2 3.4 Z" fill="#333"/></svg>
<div class="cb" style="left:834px;top:181px;width:13px;height:13px;"></div>
<span class="t" style="top:177.00px;font-size:16px;line-height:24px;left:854px;transform:scaleX(0.9930);transform-origin:left center;">See Material Handling Equipment</span>
<div class="grp-h" style="left:24px;top:210px;width:1628px;height:22px;"></div>
<div class="grp-b" style="left:24px;top:232px;width:1628px;height:122px;"></div>
<span class="t" style="top:209.70px;font-size:14.67px;line-height:22px;color:#6a6a6a;font-weight:bold;left:434.5px;width:800px;text-align:center;">Description</span>
<span class="t" style="top:240.80px;font-size:16px;line-height:24px;right:1532.5px;transform:scaleX(0.9930);transform-origin:right center;">Description</span>
<div class="inp" style="left:395px;top:238px;width:1202px;height:25px;"></div>
<span class="t" style="top:239.80px;font-size:14.67px;line-height:22px;left:401.5px;">Cadreuse Hydraulique</span>
<span class="t" style="top:276.80px;font-size:16px;line-height:24px;right:1532.5px;transform:scaleX(0.9930);transform-origin:right center;">Parent Machine</span>
<div class="inp" style="left:395px;top:274px;width:408px;height:26px;"></div>
<div class="dd" style="left:786px;top:276px;width:15px;height:22px;"></div>
<svg style="left:790.5px;top:285.5px;" width="7" height="4" viewBox="0 0 7 4"><path d="M0 0 H6.4 L3.2 3.4 Z" fill="#333"/></svg>
<span class="t" style="top:315.40px;font-size:16px;line-height:24px;right:1532.5px;transform:scaleX(0.9930);transform-origin:right center;">Parent Cost Center</span>
<div class="inp" style="left:395px;top:313px;width:408px;height:26px;"></div>
<div class="dd" style="left:786px;top:315px;width:15px;height:22px;"></div>
<svg style="left:790.5px;top:324.5px;" width="7" height="4" viewBox="0 0 7 4"><path d="M0 0 H6.4 L3.2 3.4 Z" fill="#333"/></svg>
<span class="t" style="top:315.30px;font-size:14.67px;line-height:22px;left:401.5px;">A-B1</span>
<div class="cb" style="left:833px;top:320px;width:13px;height:13px;"></div>
<span class="t" style="top:315.80px;font-size:16px;line-height:24px;left:853px;transform:scaleX(0.9930);transform-origin:left center;">Handling Machines</span>
<div class="grp-h" style="left:1666px;top:210px;width:228px;height:22px;"></div>
<div class="grp-b" style="left:1666px;top:232px;width:228px;height:122px;"></div>
<span class="t" style="top:209.70px;font-size:14.67px;line-height:22px;color:#6a6a6a;font-weight:bold;left:1377.6px;width:800px;text-align:center;">Hours</span>
<div class="cb" style="left:1697px;top:248px;width:13px;height:13px;"></div>
<span class="t" style="top:243.80px;font-size:16px;line-height:24px;left:1717px;transform:scaleX(0.9930);transform-origin:left center;">Day</span>
<div class="cb" style="left:1697px;top:277px;width:13px;height:13px;"></div>
<svg style="left:1697px;top:277px;" width="13" height="13" viewBox="0 0 13 13"><path d="M2.6 6.4 L5.2 9.2 L10.4 3.2" fill="none" stroke="#222" stroke-width="1.3"/></svg>
<span class="t" style="top:272.80px;font-size:16px;line-height:24px;left:1717px;transform:scaleX(0.9930);transform-origin:left center;">P1</span>
<div class="cb" style="left:1784px;top:277px;width:13px;height:13px;"></div>
<span class="t" style="top:272.80px;font-size:16px;line-height:24px;left:1804px;transform:scaleX(0.9930);transform-origin:left center;">P2</span>
<div class="cb" style="left:1697px;top:309px;width:13px;height:13px;"></div>
<span class="t" style="top:304.80px;font-size:16px;line-height:24px;left:1717px;transform:scaleX(0.9930);transform-origin:left center;">P3</span>
<div class="cb" style="left:1784px;top:309px;width:13px;height:13px;"></div>
<span class="t" style="top:304.80px;font-size:16px;line-height:24px;left:1804px;transform:scaleX(0.9930);transform-origin:left center;">P4</span>
<div class="grp-h" style="left:24px;top:364px;width:1870px;height:22px;"></div>
<div class="grp-b" style="left:24px;top:386px;width:1870px;height:102px;"></div>
<span class="t" style="top:363.70px;font-size:14.67px;line-height:22px;color:#6a6a6a;font-weight:bold;left:552px;width:800px;text-align:center;">Datas (time in Hours.cent)</span>
<span class="t" style="top:399.80px;font-size:16px;line-height:24px;left:57px;transform:scaleX(0.9930);transform-origin:left center;">Machine Staff</span>
<div class="inp" style="left:53px;top:425px;width:169px;height:24px;"></div>
<span class="t" style="top:426.30px;font-size:14.67px;line-height:22px;right:1700.8px;">1</span>
<span class="t" style="top:426.80px;font-size:16px;line-height:24px;left:228px;transform:scaleX(0.9930);transform-origin:left center;">Person(s)</span>
<span class="t" style="top:399.80px;font-size:16px;line-height:24px;left:432px;transform:scaleX(0.9930);transform-origin:left center;">Machine Productivity</span>
<div class="addon" style="left:428px;top:425px;width:22px;height:24px;"></div>
<span class="t" style="top:426.60px;font-size:14.67px;line-height:22px;color:#5c5c5c;left:38.60000000000002px;width:800px;text-align:center;transform:scaleX(0.9000);transform-origin:center center;">%</span>
<div class="inp" style="left:449px;top:425px;width:148px;height:24px;"></div>
<span class="t" style="top:426.30px;font-size:14.67px;line-height:22px;right:1325.8px;">100</span>
<span class="t" style="top:399.80px;font-size:16px;line-height:24px;left:728px;transform:scaleX(0.9930);transform-origin:left center;">Hourly Machine Rate</span>
<div class="addon" style="left:724px;top:425px;width:33px;height:24px;"></div>
<span class="t" style="top:426.60px;font-size:14.67px;line-height:22px;color:#5c5c5c;left:340.6px;width:800px;text-align:center;">€</span>
<div class="inp" style="left:756px;top:425px;width:137px;height:24px;"></div>
<span class="t" style="top:426.30px;font-size:14.67px;line-height:22px;right:1029.8px;">0</span>
<span class="t" style="top:426.80px;font-size:16px;line-height:24px;left:900px;transform:scaleX(0.9930);transform-origin:left center;">/ Hour</span>
<span class="t" style="top:399.80px;font-size:16px;line-height:24px;left:1096px;transform:scaleX(0.9930);transform-origin:left center;">Hourly Labor Rate</span>
<div class="addon" style="left:1092px;top:425px;width:33px;height:24px;"></div>
<span class="t" style="top:426.60px;font-size:14.67px;line-height:22px;color:#5c5c5c;left:708.5999999999999px;width:800px;text-align:center;">€</span>
<div class="inp" style="left:1124px;top:425px;width:137px;height:24px;"></div>
<span class="t" style="top:426.30px;font-size:14.67px;line-height:22px;right:661.8px;">41</span>
<span class="t" style="top:426.80px;font-size:16px;line-height:24px;left:1267px;transform:scaleX(0.9930);transform-origin:left center;">/ Hour</span>
<span class="t" style="top:399.80px;font-size:16px;line-height:24px;left:1478px;transform:scaleX(0.9930);transform-origin:left center;">Capacity</span>
<div class="inp" style="left:1474px;top:425px;width:169px;height:24px;"></div>
<span class="t" style="top:426.30px;font-size:14.67px;line-height:22px;right:279.79999999999995px;">7</span>
<span class="t" style="top:426.80px;font-size:16px;line-height:24px;left:1649px;transform:scaleX(0.9930);transform-origin:left center;">H / D</span>
<div style="left:24px;top:509px;width:1870px;height:343px;background:#f5f5f5;border:1px solid #d2d2d2;border-radius:5px;"></div>
<div style="left:28px;top:498px;width:1862px;height:23px;background:#ececec;border:1px solid #d0d0d0;"></div>
<div style="left:31px;top:501px;width:17px;height:17px;background:#f2f2f2;border:1px solid #a4a4a4;"></div>
<div style="left:33px;top:503px;width:13px;height:13px;border:1px dotted #222;"></div>
<div style="left:34.5px;top:507.6px;width:7.5px;height:1.6px;background:#111;"></div>
<span class="t" style="top:497.70px;font-size:14.67px;line-height:22px;color:#6a6a6a;font-weight:bold;left:52.2px;">Handling</span>
<span class="t" style="top:543.80px;font-size:16px;line-height:24px;right:1633px;transform:scaleX(0.9930);transform-origin:right center;">Assigned Location</span>
<div class="inp" style="left:295px;top:541px;width:461px;height:26px;"></div>
<div class="dd" style="left:739px;top:543px;width:15px;height:22px;"></div>
<svg style="left:743.5px;top:552.5px;" width="7" height="4" viewBox="0 0 7 4"><path d="M0 0 H6.4 L3.2 3.4 Z" fill="#333"/></svg>
<span class="t" style="top:598.80px;font-size:16px;line-height:24px;right:1633px;transform:scaleX(0.9930);transform-origin:right center;">Energy</span>
<div class="inp" style="left:295px;top:596px;width:207px;height:26px;"></div>
<div class="dd" style="left:485px;top:598px;width:15px;height:22px;"></div>
<svg style="left:489.5px;top:607.5px;" width="7" height="4" viewBox="0 0 7 4"><path d="M0 0 H6.4 L3.2 3.4 Z" fill="#333"/></svg>
<span class="t" style="top:634.80px;font-size:16px;line-height:24px;right:1633px;transform:scaleX(0.9930);transform-origin:right center;">Autonomy</span>
<div class="inp" style="left:295px;top:635px;width:169px;height:25px;"></div>
<span class="t" style="top:636.80px;font-size:14.67px;line-height:22px;right:1458.8px;">0</span>
<span class="t" style="top:637.00px;font-size:16px;line-height:24px;left:470px;transform:scaleX(0.9930);transform-origin:left center;">hours</span>
<span class="t" style="top:671.80px;font-size:16px;line-height:24px;right:1633px;transform:scaleX(0.9930);transform-origin:right center;">Slow Load</span>
<div class="inp" style="left:295px;top:672px;width:169px;height:25px;"></div>
<span class="t" style="top:673.80px;font-size:14.67px;line-height:22px;right:1458.8px;">0</span>
<span class="t" style="top:674.00px;font-size:16px;line-height:24px;left:470px;transform:scaleX(0.9930);transform-origin:left center;">hours</span>
<span class="t" style="top:707.80px;font-size:16px;line-height:24px;right:1633px;transform:scaleX(0.9930);transform-origin:right center;">Quick Load</span>
<div class="inp" style="left:295px;top:708px;width:169px;height:25px;"></div>
<span class="t" style="top:709.80px;font-size:14.67px;line-height:22px;right:1458.8px;">0</span>
<span class="t" style="top:710.00px;font-size:16px;line-height:24px;left:470px;transform:scaleX(0.9930);transform-origin:left center;">hours</span>
<span class="t" style="top:743.80px;font-size:16px;line-height:24px;right:1633px;transform:scaleX(0.9930);transform-origin:right center;">Raised Speed</span>
<div class="inp" style="left:295px;top:744px;width:169px;height:25px;"></div>
<span class="t" style="top:745.80px;font-size:14.67px;line-height:22px;right:1458.8px;">0</span>
<span class="t" style="top:746.00px;font-size:16px;line-height:24px;left:470px;transform:scaleX(0.9930);transform-origin:left center;">m / s</span>
<span class="t" style="top:780.80px;font-size:16px;line-height:24px;right:1633px;transform:scaleX(0.9930);transform-origin:right center;">Travel speed</span>
<div class="inp" style="left:295px;top:781px;width:169px;height:25px;"></div>
<span class="t" style="top:782.80px;font-size:14.67px;line-height:22px;right:1458.8px;">0</span>
<span class="t" style="top:783.00px;font-size:16px;line-height:24px;left:470px;transform:scaleX(0.9930);transform-origin:left center;">m / s</span>
<div class="grp-h" style="left:811px;top:525px;width:543px;height:24px;"></div>
<div class="grp-b" style="left:811px;top:549px;width:543px;height:184px;"></div>
<span class="t" style="top:524.60px;font-size:14.67px;line-height:22px;color:#6a6a6a;font-weight:bold;left:677px;width:800px;text-align:center;">Dimensions</span>
<span class="t" style="top:568.80px;font-size:16px;line-height:24px;right:796px;transform:scaleX(0.9930);transform-origin:right center;">Length</span>
<div class="inp" style="left:1132px;top:568px;width:169px;height:25px;"></div>
<span class="t" style="top:569.80px;font-size:14.67px;line-height:22px;right:621.8px;">0</span>
<span class="t" style="top:569.30px;font-size:16px;line-height:24px;left:1307px;transform:scaleX(0.9930);transform-origin:left center;">m</span>
<span class="t" style="top:605.30px;font-size:16px;line-height:24px;right:796px;transform:scaleX(0.9930);transform-origin:right center;">Width</span>
<div class="inp" style="left:1132px;top:604px;width:169px;height:25px;"></div>
<span class="t" style="top:605.80px;font-size:14.67px;line-height:22px;right:621.8px;">0</span>
<span class="t" style="top:605.80px;font-size:16px;line-height:24px;left:1307px;transform:scaleX(0.9930);transform-origin:left center;">m</span>
<span class="t" style="top:641.80px;font-size:16px;line-height:24px;right:796px;transform:scaleX(0.9930);transform-origin:right center;">Raised Height</span>
<div class="inp" style="left:1132px;top:640px;width:169px;height:25px;"></div>
<span class="t" style="top:641.80px;font-size:14.67px;line-height:22px;right:621.8px;">0</span>
<span class="t" style="top:642.30px;font-size:16px;line-height:24px;left:1307px;transform:scaleX(0.9930);transform-origin:left center;">m</span>
<span class="t" style="top:677.80px;font-size:16px;line-height:24px;right:792.5px;transform:scaleX(0.9930);transform-origin:right center;">Mini Aisles Width</span>
<div class="inp" style="left:1135px;top:676px;width:169px;height:25px;"></div>
<span class="t" style="top:677.80px;font-size:14.67px;line-height:22px;right:618.8px;">0</span>
<span class="t" style="top:678.30px;font-size:16px;line-height:24px;left:1311px;transform:scaleX(0.9930);transform-origin:left center;">m</span>
<div class="cb" style="left:852px;top:800px;width:13px;height:13px;"></div>
<span class="t" style="top:796.30px;font-size:16px;line-height:24px;left:872px;transform:scaleX(0.9930);transform-origin:left center;">Handling on Ground, Pallets closed</span>
<div class="grp-h" style="left:1368px;top:525px;width:448px;height:24px;"></div>
<div class="grp-b" style="left:1368px;top:549px;width:448px;height:110px;"></div>
<span class="t" style="top:524.60px;font-size:14.67px;line-height:22px;color:#6a6a6a;font-weight:bold;left:1188px;width:800px;text-align:center;">Max Load</span>
<span class="t" style="top:566.20px;font-size:16px;line-height:24px;right:353px;transform:scaleX(0.9930);transform-origin:right center;">On the Floor</span>
<div class="inp" style="left:1574px;top:565px;width:169px;height:25px;"></div>
<span class="t" style="top:566.80px;font-size:14.67px;line-height:22px;right:179.79999999999995px;">0</span>
<span class="t" style="top:566.70px;font-size:16px;line-height:24px;left:1750px;transform:scaleX(0.9930);transform-origin:left center;">kg</span>
<span class="t" style="top:602.40px;font-size:16px;line-height:24px;right:353px;transform:scaleX(0.9930);transform-origin:right center;">In rising</span>
<div class="inp" style="left:1574px;top:601px;width:169px;height:25px;"></div>
<span class="t" style="top:602.80px;font-size:14.67px;line-height:22px;right:179.79999999999995px;">0</span>
<span class="t" style="top:602.90px;font-size:16px;line-height:24px;left:1750px;transform:scaleX(0.9930);transform-origin:left center;">kg</span>
<div class="grp-h" style="left:1368px;top:669px;width:448px;height:24px;"></div>
<div class="grp-b" style="left:1368px;top:693px;width:448px;height:142px;"></div>
<span class="t" style="top:668.60px;font-size:14.67px;line-height:22px;color:#6a6a6a;font-weight:bold;left:1189px;width:800px;text-align:center;">Forks</span>
<span class="t" style="top:708.80px;font-size:16px;line-height:24px;right:353px;transform:scaleX(0.9930);transform-origin:right center;">Length</span>
<div class="inp" style="left:1574px;top:706px;width:169px;height:25px;"></div>
<span class="t" style="top:707.80px;font-size:14.67px;line-height:22px;right:179.79999999999995px;">0</span>
<span class="t" style="top:707.60px;font-size:16px;line-height:24px;left:1750.4px;transform:scaleX(0.9930);transform-origin:left center;">m</span>
<span class="t" style="top:744.50px;font-size:16px;line-height:24px;right:353px;transform:scaleX(0.9930);transform-origin:right center;">Min Gap</span>
<div class="inp" style="left:1574px;top:742px;width:169px;height:25px;"></div>
<span class="t" style="top:743.80px;font-size:14.67px;line-height:22px;right:179.79999999999995px;">0</span>
<span class="t" style="top:742.70px;font-size:16px;line-height:24px;left:1750.4px;transform:scaleX(0.9930);transform-origin:left center;">m</span>
<span class="t" style="top:780.50px;font-size:16px;line-height:24px;right:353px;transform:scaleX(0.9930);transform-origin:right center;">Max Gap</span>
<div class="inp" style="left:1574px;top:778px;width:169px;height:25px;"></div>
<span class="t" style="top:779.80px;font-size:14.67px;line-height:22px;right:179.79999999999995px;">0</span>
<span class="t" style="top:778.70px;font-size:16px;line-height:24px;left:1750.4px;transform:scaleX(0.9930);transform-origin:left center;">m</span>
<div style="left:24px;top:873px;width:1870px;height:239px;background:#f5f5f5;border:1px solid #d2d2d2;border-radius:5px;"></div>
<div style="left:28px;top:862px;width:1862px;height:23px;background:#ececec;border:1px solid #d0d0d0;"></div>
<div style="left:31px;top:865px;width:17px;height:17px;background:#f2f2f2;border:1px solid #a4a4a4;"></div>
<div style="left:34.5px;top:871.6px;width:7.5px;height:1.6px;background:#111;"></div>
<span class="t" style="top:861.70px;font-size:14.67px;line-height:22px;color:#6a6a6a;font-weight:bold;left:52.2px;">Maintenance</span>
<div class="grp-h" style="left:38px;top:914px;width:717px;height:23.5px;"></div>
<div class="grp-b" style="left:38px;top:937.5px;width:717px;height:138.5px;"></div>
<span class="t" style="top:913.35px;font-size:14.67px;line-height:22px;color:#6a6a6a;font-weight:bold;left:-12px;width:800px;text-align:center;">Maintenance Periodicity</span>
<span class="t" style="top:962.80px;font-size:16px;line-height:24px;right:1523.5px;transform:scaleX(0.9930);transform-origin:right center;">After a period of</span>
<div class="inp" style="left:405px;top:961px;width:169px;height:25px;"></div>
<span class="t" style="top:962.80px;font-size:14.67px;line-height:22px;right:1348.8px;">0</span>
<span class="t" style="top:963.30px;font-size:16px;line-height:24px;left:580px;transform:scaleX(0.9930);transform-origin:left center;">week(s)</span>
<span class="t" style="top:996.30px;font-size:16px;line-height:24px;right:1523.5px;transform:scaleX(0.9930);transform-origin:right center;">After a time of use of</span>
<div class="inp" style="left:405px;top:995px;width:169px;height:25px;"></div>
<span class="t" style="top:996.80px;font-size:14.67px;line-height:22px;right:1348.8px;">0</span>
<span class="t" style="top:997.30px;font-size:16px;line-height:24px;left:580px;transform:scaleX(0.9930);transform-origin:left center;">hour(s)</span>
<div class="grp-h" style="left:769px;top:914px;width:1116px;height:23.5px;"></div>
<div class="grp-b" style="left:769px;top:937.5px;width:1116px;height:138.5px;"></div>
<span class="t" style="top:913.35px;font-size:14.67px;line-height:22px;color:#6a6a6a;font-weight:bold;left:920.5px;width:800px;text-align:center;">Last maintenance</span>
<span class="t" style="top:956.30px;font-size:16px;line-height:24px;right:847.5px;transform:scaleX(0.9930);transform-origin:right center;">Time of use since</span>
<div class="inp" style="left:1080px;top:956px;width:169px;height:25px;"></div>
<span class="t" style="top:957.80px;font-size:14.67px;line-height:22px;right:673.8px;">0</span>
<span class="t" style="top:957.30px;font-size:16px;line-height:24px;left:1256px;transform:scaleX(0.9930);transform-origin:left center;">hour(s)</span>
<div class="btn" style="left:1399px;top:950px;width:421px;height:36px;"></div>
<span class="t" style="top:957.00px;font-size:14.67px;line-height:22px;color:#333;left:1216.5px;width:800px;text-align:center;">Calculate for all machines</span>
<svg style="left:1407px;top:959px;" width="18" height="18" viewBox="0 0 18 18"><circle cx="11.7" cy="7.6" r="3.1" fill="none" stroke="#0a0a0a" stroke-width="2.6"/><circle cx="11.7" cy="7.6" r="4.9" fill="none" stroke="#0a0a0a" stroke-width="1.7" stroke-dasharray="1.92 1.93"/><circle cx="5.1" cy="13.8" r="1.9" fill="none" stroke="#0a0a0a" stroke-width="1.8"/><circle cx="5.1" cy="13.8" r="3.1" fill="none" stroke="#0a0a0a" stroke-width="1.4" stroke-dasharray="1.62 1.63"/></svg>
<span class="t" style="top:1024.80px;font-size:16px;line-height:24px;right:1012.5px;transform:scaleX(0.9930);transform-origin:right center;">Date</span>
<div class="inp" style="left:916px;top:1022px;width:169px;height:25px;"></div>
<div class="dd" style="left:1067px;top:1023px;width:17px;height:23px;"></div>
<svg style="left:1072.5px;top:1033px;" width="7" height="4" viewBox="0 0 7 4"><path d="M0 0 H6.4 L3.2 3.4 Z" fill="#333"/></svg>
<span class="t" style="top:1023.30px;font-size:16px;line-height:24px;right:661.5px;transform:scaleX(0.9930);transform-origin:right center;">Comments</span>
<div class="inp" style="left:1267px;top:1023px;width:553px;height:25px;"></div>
<span class="t" style="top:1024.80px;font-size:14.67px;line-height:22px;left:1273.5px;">Cadreuse hydraulique</span>
<div class="btn" style="left:23px;top:1121px;width:209px;height:41px;"></div>
<span class="t" style="top:1130.50px;font-size:14.67px;line-height:22px;color:#333;left:-264px;width:800px;text-align:center;">Save</span>
<div class="btn" style="left:244px;top:1121px;width:209px;height:41px;"></div>
<span class="t" style="top:1130.50px;font-size:14.67px;line-height:22px;color:#333;left:-43px;width:800px;text-align:center;">Cancel</span>
<div class="btn" style="left:465px;top:1121px;width:209px;height:41px;"></div>
<span class="t" style="top:1130.50px;font-size:14.67px;line-height:22px;color:#333;left:177px;width:800px;text-align:center;">Delete</span>
<div class="btn" style="left:1686px;top:1121px;width:209px;height:41px;"></div>
<span class="t" style="top:1130.50px;font-size:14.67px;line-height:22px;color:#333;left:1398px;width:800px;text-align:center;">Close</span>
<svg style="left:32px;top:1133px;" width="17" height="17" viewBox="0 0 17 17"><path d="M1.6 1.3 H10.6 L15.3 5.6 V15.3 H1.6 Z" fill="#b7c6d4" stroke="#0c7bb3" stroke-width="1.5" stroke-linejoin="round"/><rect x="3.6" y="1.6" width="7.2" height="4.4" fill="#0c7bb3"/><rect x="7.2" y="2" width="1.9" height="3.2" fill="#fff"/><rect x="4" y="10" width="8.8" height="4.6" fill="#fff" stroke="#0c7bb3" stroke-width="1.2"/></svg>
<svg style="left:252px;top:1132px;" width="18" height="18" viewBox="0 0 18 18"><path d="M5 4.8 A6 6 0 1 1 3.3 10.8" fill="none" stroke="#e81c24" stroke-width="2.6"/><path d="M1.4 1.2 L2.2 8.6 L9 6.2 Z" fill="#e81c24"/></svg>
<svg style="left:475px;top:1133px;" width="14" height="16" viewBox="0 0 14 16"><path d="M1.5 4.5 H12.5 L11.6 15 H2.4 Z" fill="#222"/><rect x="0.8" y="2" width="12.4" height="1.8" fill="#222"/><rect x="4.6" y="0.4" width="4.8" height="1.8" fill="#222"/><path d="M4.6 6 V13.4 M7 6 V13.4 M9.4 6 V13.4" stroke="#fff" stroke-width="0.9"/></svg>
<svg style="left:1694px;top:1132px;" width="19" height="18" viewBox="0 0 19 18"><path d="M2.6 2.6 L16 15.4 M16 2.6 L2.6 15.4" stroke="#e81c24" stroke-width="3.9" fill="none"/></svg>
</div>
</body></html>
